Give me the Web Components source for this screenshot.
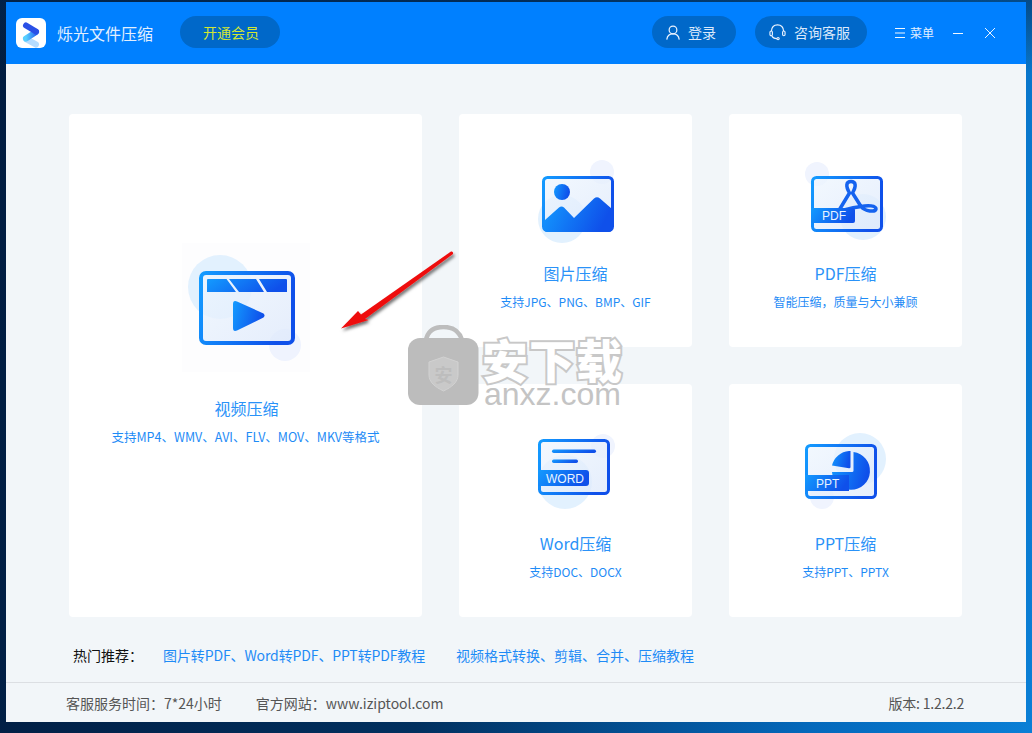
<!DOCTYPE html>
<html lang="zh-CN">
<head>
<meta charset="utf-8">
<title>烁光文件压缩</title>
<style>
html,body{margin:0;height:733px;overflow:hidden}
body{background:
 linear-gradient(180deg,rgba(2,40,80,.55) 0,rgba(0,0,0,0) 10%),
 linear-gradient(97deg,#011c40 0,#01305f 45%,#0468bb 80%,#0a7fd6 100%);
 font-family:"Noto Sans CJK SC","Noto Sans",sans-serif}
</style>
</head>
<body>
<app-window>
  <title-bar slot="top"></title-bar>
  <feature-grid>
    <feature-card class="big" heading="视频压缩" sub="支持MP4、WMV、AVI、FLV、MOV、MKV等格式" icon="video"></feature-card>
    <feature-card heading="图片压缩" sub="支持JPG、PNG、BMP、GIF" icon="image"></feature-card>
    <feature-card heading="PDF压缩" sub="智能压缩&#xFF0C;质量与大小兼顾" icon="pdf"></feature-card>
    <feature-card heading="Word压缩" sub="支持DOC、DOCX" icon="word"></feature-card>
    <feature-card heading="PPT压缩" sub="支持PPT、PPTX" icon="ppt"></feature-card>
  </feature-grid>
  <hot-links></hot-links>
  <status-bar></status-bar>
</app-window>
<red-arrow></red-arrow>
<brand-watermark></brand-watermark>

<script>
const CJK='"Noto Sans CJK SC","Noto Sans",sans-serif';

class AppWindow extends HTMLElement{
  constructor(){super();this.attachShadow({mode:'open'}).innerHTML=`
  <style>
  :host{display:flex;flex-direction:column;width:1020px;height:720px;margin:2px 0 0 6px;background:#f2f6f9;font-family:${CJK}}
  </style><slot name="top"></slot><slot></slot>`;}
}

class PillButton extends HTMLElement{
  constructor(){super();this.attachShadow({mode:'open'}).innerHTML=`
  <style>
  :host{display:flex;align-items:center;justify-content:flex-start;gap:8px;height:32px;padding-left:14px;border-radius:16px;background:#0068c9;color:#dbe9fb;font-size:14px;line-height:32px;box-sizing:border-box}
  :host([accent]){color:#d3e632;padding-left:23px}
  ::slotted(svg){display:block;flex:none}
  </style><slot name="icon"></slot><slot></slot>`;}
}

class TitleBar extends HTMLElement{
  constructor(){super();this.attachShadow({mode:'open'}).innerHTML=`
  <style>
  :host{display:flex;align-items:center;height:62px;background:#0080ff;padding:0 31px 2px 10px;box-sizing:border-box;color:#e2effe;flex:none;font-family:${CJK}}
  .logo{display:block;width:30px;height:30px;border-radius:6px;background:#fff;flex:none;margin-top:2px}
  .name{font-size:16px;line-height:24px;margin:1px 0 0 11px}
  .vip{width:100px;margin-left:27px}
  .sp{flex:1}
  .login{width:84px}
  .help{width:112px;margin-left:19px}
  .menu{display:flex;align-items:center;gap:5px;font-size:12px;margin:2px 0 0 28px;line-height:18px}
  .min{margin:2px 0 0 19px;display:block}
  .x{margin:2px 0 0 22px;display:block}
  svg{flex:none}
  </style>
  <svg class="logo" viewBox="0 0 30 30">
    <defs><linearGradient id="lg" x1="0" y1="0" x2="1" y2="0"><stop offset="0" stop-color="#57d0ff"/><stop offset="1" stop-color="#2a6cf0"/></linearGradient></defs>
    <path d="M10 21 L20 26.500" stroke="#b4dcff" stroke-width="6" stroke-linecap="round" fill="none"/>
    <path d="M20 14 L10 20.500" stroke="url(#lg)" stroke-width="6" stroke-linecap="round" fill="none"/>
    <path d="M10 7.500 L20 13.500" stroke="#2a50e6" stroke-width="6" stroke-linecap="round" fill="none"/>
  </svg>
  <span class="name">烁光文件压缩</span>
  <pill-button class="vip" accent>开通会员</pill-button>
  <span class="sp"></span>
  <pill-button class="login">
    <svg slot="icon" width="14" height="15" viewBox="0 0 16 17" fill="none" stroke="#eaf3ff" stroke-width="1.400"><circle cx="8" cy="5.600" r="4.400"/><path d="M1 16 C1.500 12 4.400 10 8 10 C11.600 10 14.500 12 15 16" stroke-linecap="round"/></svg>
    登录
  </pill-button>
  <pill-button class="help">
    <svg slot="icon" width="17" height="18" viewBox="0 0 18 18" fill="none" stroke="#eaf3ff" stroke-width="1.200"><path d="M2.600 8 C2.800 4 5.400 1.400 9 1.400 C12.600 1.400 15.200 4 15.400 8"/><rect x="1" y="8" width="2.600" height="5" rx="1.300"/><rect x="14.400" y="8" width="2.600" height="5" rx="1.300"/><path d="M3 13 C4 15.500 6 16 8.400 16"/><circle cx="9.600" cy="16" r="1.200"/></svg>
    咨询客服
  </pill-button>
  <span class="menu">
    <svg width="10" height="10" viewBox="0 0 10 10" stroke="#f2f8ff" stroke-width="1"><path d="M0 .5H10M0 5H10M0 9.500H10"/></svg>
    菜单
  </span>
  <svg class="min" width="10" height="10" viewBox="0 0 10 10" stroke="#f2f8ff" stroke-width="1"><path d="M0 5.500H10"/></svg>
  <svg class="x" width="10" height="10" viewBox="0 0 10 10" stroke="#eaf3ff" stroke-width="1" fill="none"><path d="M0 0L10 10M10 0L0 10"/></svg>`;}
}

const defs=`<defs>
 <linearGradient id="g" x1="0" y1="0" x2="1" y2="0.25"><stop offset="0" stop-color="#139bff"/><stop offset="1" stop-color="#0f50ea"/></linearGradient>
 <linearGradient id="p" x1="0" y1="0" x2="1" y2="1"><stop offset="0" stop-color="#eef6fe"/><stop offset="1" stop-color="#dde8fb"/></linearGradient>
</defs>`;
const ICONS={
video:{vb:"182 243 128 129",svg:`
  <rect x="182" y="243" width="128" height="129" fill="#fdfdfe"/>
  <circle cx="220" cy="287" r="32" fill="#e2f1fe"/>
  <circle cx="285" cy="345" r="16" fill="#eff3fe"/>
  <rect x="201" y="273" width="92" height="70" rx="5" fill="url(#p)" fill-opacity=".75" stroke="url(#g)" stroke-width="4"/>
  <path d="M208 279H226.500L236 292H207V280Q207 279 208 279Z M229 279H256L264 292H239Z M259 279H286Q287 279 287 280V292H267Z" fill="url(#g)"/>
  <path d="M233 304Q233 300 237 301.500L263.500 313.500Q265.500 315.500 263.500 317.500L237 330.500Q233 332 233 328Z" fill="url(#g)"/>`},
image:{vb:"515 150 121 100",svg:`
  <circle cx="562" cy="219" r="24" fill="#e2f1fe"/>
  <circle cx="602" cy="172" r="12" fill="#f0f4fe"/>
  <rect x="543.500" y="177.500" width="69" height="53" rx="4" fill="url(#p)" fill-opacity=".75" stroke="url(#g)" stroke-width="3"/>
  <circle cx="562" cy="192" r="8" fill="url(#g)"/>
  <path d="M545 220L559 207.500Q561.500 205.500 564 207.500L574 218L594 198.500Q597 196 600 198.500L612 209V228Q612 232 608 232H548Q544 232 544 228V221Z" fill="url(#g)"/>`},
pdf:{vb:"785 150 121 100",svg:`
  <circle cx="817" cy="174" r="12" fill="#f0f4fe"/>
  <circle cx="863" cy="217" r="23" fill="#e2f1fe"/>
  <rect x="812.500" y="177.500" width="69" height="53" rx="4" fill="url(#p)" fill-opacity=".75" stroke="url(#g)" stroke-width="3"/>
  <path d="M838 212L849.500 193C845.500 186 846 181.500 851 181.500C856 181.500 856.500 186 852.500 193L861 206.500C865 211.500 875.500 212.500 876 209C876 205.500 868 205 861 206.500C854 207.500 846 208.500 838 212" fill="none" stroke="#1563ef" stroke-width="3.500" stroke-linejoin="round"/>
  <path d="M811 208H853Q855 208 855 210V221Q855 223 853 223H811Z" fill="url(#g)"/>
  <text x="822" y="220" font-family="Liberation Sans,sans-serif" font-size="12" fill="#e9f4ff">PDF</text>`},
word:{vb:"515 420 121 100",svg:`
  <circle cx="565" cy="482" r="27" fill="#e2f1fe"/>
  <circle cx="603" cy="446" r="12" fill="#f0f4fe"/>
  <rect x="539.500" y="440.500" width="69" height="53" rx="4" fill="url(#p)" fill-opacity=".75" stroke="url(#g)" stroke-width="3"/>
  <rect x="552" y="449.500" width="44" height="3.500" rx="1.700" fill="url(#g)"/>
  <rect x="552" y="459.500" width="26" height="3.500" rx="1.700" fill="url(#g)"/>
  <path d="M538 470H586Q589 470 589 473V483Q589 486 586 486H538Z" fill="url(#g)"/>
  <text x="546" y="482.500" font-family="Liberation Sans,sans-serif" font-size="12" fill="#e9f4ff">WORD</text>`},
ppt:{vb:"785 420 121 100",svg:`
  <circle cx="860" cy="459" r="26" fill="#e2f1fe"/>
  <circle cx="822" cy="497" r="12" fill="#f0f4fe"/>
  <rect x="806.500" y="445.500" width="69" height="52" rx="4" fill="url(#p)" fill-opacity=".75" stroke="url(#g)" stroke-width="3"/>
  <path d="M853.500 452A19 19 0 1 1 832 472H852Q853.500 472 853.500 470.500Z" fill="url(#g)"/>
  <path d="M850.500 451V467Q850.500 468.500 849 468.300L832 465.500A19 19 0 0 1 849 451Q850.500 450.800 850.500 451Z" fill="url(#g)"/>
  <path d="M805 475H849V491H805Z" fill="url(#g)"/>
  <text x="816" y="487.500" font-family="Liberation Sans,sans-serif" font-size="12" fill="#e9f4ff">PPT</text>`}
};
class AppIcon extends HTMLElement{
  connectedCallback(){
    const ic=ICONS[this.getAttribute('name')];
    const [,,w,h]=ic.vb.split(' ');
    this.attachShadow({mode:'open'}).innerHTML=`
    <style>:host{display:block;width:${w}px;height:${h}px;flex:none} svg{display:block}</style>
    <svg width="${w}" height="${h}" viewBox="${ic.vb}">${defs}${ic.svg}</svg>`;
  }
}

class FeatureCard extends HTMLElement{
  connectedCallback(){
    this.attachShadow({mode:'open'}).innerHTML=`
    <style>
    :host{display:flex;flex-direction:column;align-items:center;background:#fff;border-radius:4px;padding-top:36px;box-sizing:border-box;color:#2a92f8}
    :host(.big){grid-row:span 2;padding-top:129px}
    h3{margin:11px 0 0;font-size:16px;line-height:24px;font-weight:400}
    :host(.big) h3{margin-top:24px;padding-left:2px}
    p{margin:7px 0 0;font-size:12px;line-height:20px;color:#1e8bf6}
    :host(.big) p{font-size:12.500px}
    </style>
    <app-icon name="${this.getAttribute('icon')}"></app-icon>
    <h3>${this.getAttribute('heading')}</h3>
    <p>${this.getAttribute('sub')}</p>`;
  }
}

class FeatureGrid extends HTMLElement{
  constructor(){super();this.attachShadow({mode:'open'}).innerHTML=`
  <style>:host{display:grid;grid-template-columns:353px 233px 233px;grid-template-rows:233px 233px;gap:37px;padding:50px 0 0 63px;flex:none}</style><slot></slot>`;}
}

class HotLinks extends HTMLElement{
  constructor(){super();this.attachShadow({mode:'open'}).innerHTML=`
  <style>
  :host{display:flex;align-items:center;height:38px;margin-top:19px;padding:0 0 0 67px;font-size:14px;line-height:20px;color:#1e8bf6;flex:none;white-space:nowrap}
  b{font-weight:400;color:#111;width:90px;flex:none}
  span{flex:none}
  .a{letter-spacing:-.12px;width:262px}
  .b{margin-left:31px}
  </style>
  <b>热门推荐&#xFF1A;</b><span class="a">图片转PDF、Word转PDF、PPT转PDF教程</span><span class="b">视频格式转换、剪辑、合并、压缩教程</span>`;}
}

class StatusBar extends HTMLElement{
  constructor(){super();this.attachShadow({mode:'open'}).innerHTML=`
  <style>
  :host{display:flex;align-items:center;height:41px;margin-top:8px;border-top:1px solid #dcdfe3;padding:0 62px 0 60px;font-size:14px;line-height:20px;color:#555;flex:none;box-sizing:border-box;white-space:nowrap}
  .site{margin-left:34px}
  .sp{flex:1}
  .v{letter-spacing:-.2px}
  </style>
  <span>客服服务时间&#xFF1A;7*24小时</span><span class="site">官方网站&#xFF1A;www.iziptool.com</span><span class="sp"></span><span class="v">版本: 1.2.2.2</span>`;}
}

class RedArrow extends HTMLElement{
  constructor(){super();this.attachShadow({mode:'open'}).innerHTML=`
  <style>:host{position:absolute;left:330px;top:240px;width:140px;height:100px;display:block} svg{display:block;overflow:visible}</style>
  <svg width="140" height="100" viewBox="330 240 140 100">
    <defs><filter id="s" x="-20%" y="-20%" width="140%" height="150%"><feDropShadow dx="1.500" dy="2.500" stdDeviation="1.500" flood-color="#000" flood-opacity=".55"/></filter></defs>
    <path d="M341 328.500L358 311L361 314.500L451 251.500Q453.500 251 453 254L365 319L368.500 320Z" fill="#ee0c0c" filter="url(#s)"/>
  </svg>`;}
}

class BrandWatermark extends HTMLElement{
  constructor(){super();this.attachShadow({mode:'open'}).innerHTML=`
  <style>
  :host{position:absolute;left:408px;top:325px;display:flex;gap:3px;width:220px;height:82px;pointer-events:none;font-family:${CJK}}
  svg{display:block;flex:none}
  .t{display:flex;flex-direction:column;margin-top:10px}
  .cn{font-size:46px;line-height:47px;font-weight:900;letter-spacing:1px;color:#fff;-webkit-text-stroke:4px #c8c8c8;paint-order:stroke fill;white-space:nowrap}
  .en{font-family:"Liberation Sans",sans-serif;font-size:32px;line-height:24px;color:#c4c4c4;white-space:nowrap;margin:0 0 0 2px}
  </style>
  <svg width="71" height="81" viewBox="0 0 71 81">
    <path d="M18 15C20 5 27 2 35.500 2C44 2 51 5 54 15" fill="none" stroke="#bdbdbd" stroke-width="4.500"/>
    <rect x="0" y="13" width="70.500" height="67" rx="12" fill="#bcbcbc"/>
    <path d="M35.500 32L50 37V50C50 57 44 62 35.500 66C27 62 21 57 21 50V37Z" fill="#c9c9c9" stroke="#d2d2d2" stroke-width="1"/>
    <text x="35.500" y="57" font-size="18" font-weight="700" text-anchor="middle" fill="#bdbdbd" font-family='"Noto Sans CJK SC",sans-serif'>安</text>
  </svg>
  <div class="t"><span class="cn">安下载</span><span class="en">anxz.com</span></div>`;}
}

customElements.define('app-window',AppWindow);
customElements.define('pill-button',PillButton);
customElements.define('title-bar',TitleBar);
customElements.define('app-icon',AppIcon);
customElements.define('feature-card',FeatureCard);
customElements.define('feature-grid',FeatureGrid);
customElements.define('hot-links',HotLinks);
customElements.define('status-bar',StatusBar);
customElements.define('red-arrow',RedArrow);
customElements.define('brand-watermark',BrandWatermark);
</script>
</body>
</html>
